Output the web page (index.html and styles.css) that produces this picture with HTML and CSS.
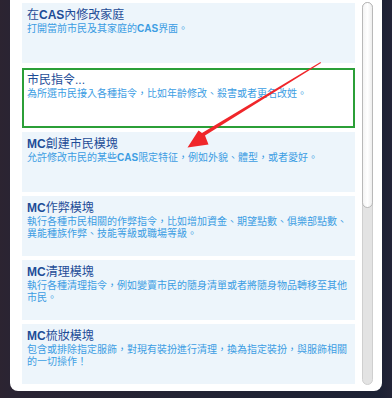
FILE: index.html
```html
<!DOCTYPE html>
<html lang="zh-Hant">
<head>
<meta charset="utf-8">
<link rel="stylesheet" href="styles.css">
</head>
<body>
<div class="panel">
  <div class="list">
    <div class="card">
      <div class="title">在<b>CAS</b>內修改家庭</div>
      <div class="desc">打開當前市民及其家庭的<b>CAS</b>界面。</div>
    </div>
    <div class="card selected">
      <div class="title">市民指令...</div>
      <div class="desc">為所選市民接入各種指令，比如年齡修改、殺害或者更名改姓。</div>
    </div>
    <div class="card">
      <div class="title"><b>MC</b>創建市民模塊</div>
      <div class="desc">允許修改市民的某些<b>CAS</b>限定特征，例如外貌、體型，或者愛好。</div>
    </div>
    <div class="card">
      <div class="title"><b>MC</b>作弊模塊</div>
      <div class="desc">執行各種市民相關的作弊指令，比如增加資金、期望點數、俱樂部點數、異能種族作弊、技能等級或職場等級。</div>
    </div>
    <div class="card">
      <div class="title"><b>MC</b>清理模塊</div>
      <div class="desc">執行各種清理指令，例如變賣市民的隨身清單或者將隨身物品轉移至其他市民。</div>
    </div>
    <div class="card">
      <div class="title"><b>MC</b>梳妝模塊</div>
      <div class="desc">包含或排除指定服飾，對現有裝扮進行清理，換為指定裝扮，與服飾相關的一切操作！</div>
    </div>
  </div>
  <div class="scrollbar"><div class="thumb"></div></div>
</div>
<svg class="arrow" width="392" height="398" viewBox="0 0 392 398">
  <polygon points="320.5,62 321,63 205,135.5 208.5,144.5 187.5,147.5 198.5,130.5 202,133" fill="#f0262a"/>
</svg>
</body>
</html>
```
FILE: styles.css
```css
html, body {
  margin: 0;
  padding: 0;
}
body {
  width: 392px;
  height: 398px;
  overflow: hidden;
  position: relative;
  background: linear-gradient(90deg, #2c2431 0%, #2a2433 3%, #222334 50%, #1c2134 97%, #232437 100%);
  font-family: "Liberation Sans", "Noto Sans CJK TC", sans-serif;
}
.panel {
  margin-left: 10px;
  width: 372px;
  height: 391px;
  background: #ffffff;
  border-radius: 0 0 8px 8px;
  box-sizing: border-box;
  padding: 3px 9px 0 12px;
  display: flex;
  gap: 7px;
}
.list {
  width: 333px;
  display: flex;
  flex-direction: column;
  gap: 4px;
}
.card {
  height: 60px;
  box-sizing: border-box;
  background: #edf5fb;
  padding: 4px 5px 0 5px;
  flex-shrink: 0;
}
.card.selected {
  background: #ffffff;
  border: 2px solid #2b9f37;
  padding: 2px 3px 0 3px;
  margin-top: 1px;
  height: 60px;
}
.title {
  font-size: 12px;
  line-height: 16px;
  color: #1d4c97;
}
.desc {
  font-size: 10px;
  line-height: 12px;
  color: #3c9de3;
}
b {
  font-weight: bold;
}
.scrollbar {
  width: 11px;
  height: 383px;
  margin-top: -1px;
  box-sizing: border-box;
  background: #e3e3e3;
  border: 1px solid #cfcfcf;
  border-radius: 6px;
  position: relative;
}
.thumb {
  height: 206px;
  margin: -1px;
  box-sizing: border-box;
  background: linear-gradient(90deg, #f4f4f4, #ffffff 50%, #eeeeee);
  border: 1px solid #b9b9b9;
  border-radius: 6px;
}
.arrow {
  position: absolute;
  left: 0;
  top: 0;
}
```
